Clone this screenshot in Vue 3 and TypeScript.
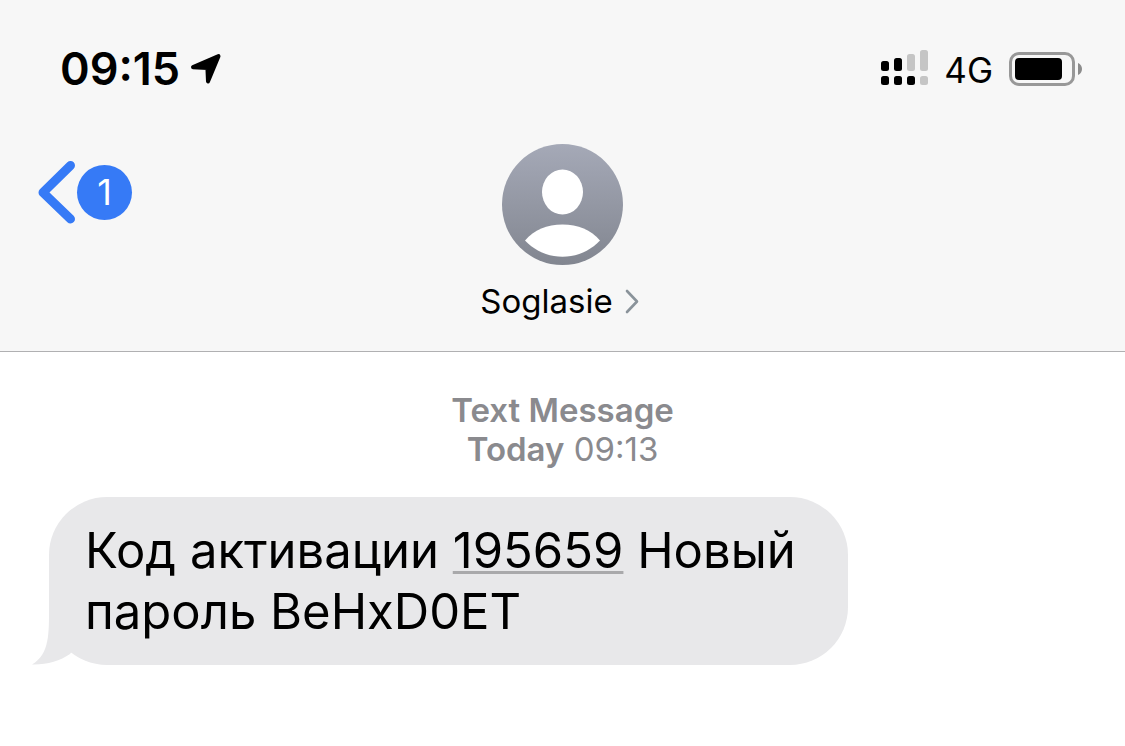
<script setup lang="ts">
interface Conversation {
  contact: string
  unread: number
  kind: string
  day: string
  time: string
}

interface SignalBar {
  x: number
  y: number
  height: number
  active: boolean
}

const clock = '09:15'
const network = '4G'

const conversation: Conversation = {
  contact: 'Soglasie',
  unread: 1,
  kind: 'Text Message',
  day: 'Today',
  time: '09:13',
}

const signal: SignalBar[] = [
  { x: 0, y: 11, height: 10, active: true },
  { x: 13, y: 8, height: 13, active: true },
  { x: 26, y: 4, height: 17, active: false },
  { x: 39, y: 0, height: 21, active: false },
  { x: 0, y: 26, height: 9, active: true },
  { x: 13, y: 26, height: 9, active: true },
  { x: 26, y: 26, height: 9, active: true },
  { x: 39, y: 26, height: 9, active: false },
]
</script>

<template>
  <div class="screen">
    <header class="header">
      <div class="status">
        <div class="status-left">
          <span class="clock">{{ clock }}</span>
          <svg class="location" width="32" height="32" viewBox="0 0 32 32" aria-hidden="true">
            <path d="M3 14.200 28.500 3.200 18 28.500 17.400 15Z" fill="#000" stroke="#000" stroke-width="4" stroke-linejoin="round" />
          </svg>
        </div>
        <div class="status-right">
          <svg width="47" height="38" viewBox="0 0 47 38" aria-hidden="true">
            <rect
              v-for="(bar, i) in signal"
              :key="i"
              :x="bar.x"
              :y="bar.y"
              width="8"
              :height="bar.height"
              rx="2.5"
              :fill="bar.active ? '#000' : '#c5c5c5'"
            />
          </svg>
          <span class="network">{{ network }}</span>
          <svg width="74" height="34" viewBox="0 0 74 34" aria-hidden="true">
            <rect x="1.5" y="1.5" width="63" height="31" rx="8.5" fill="none" stroke="#989898" stroke-width="3" />
            <rect x="6" y="6" width="47" height="22" rx="4" fill="#000" />
            <path d="M69 11c2.700 1.200 4 3.500 4 6s-1.300 4.800-4 6z" fill="#8c8c8c" />
          </svg>
        </div>
      </div>

      <nav class="nav">
        <button class="back" type="button" aria-label="Back">
          <svg width="38" height="64" viewBox="0 0 38 64" aria-hidden="true">
            <path d="M32.500 5.500 5 32.500l27.500 26.500" fill="none" stroke="#367af6" stroke-width="9" stroke-linecap="round" stroke-linejoin="round" />
          </svg>
          <span class="badge">{{ conversation.unread }}</span>
        </button>

        <button class="contact" type="button">
          <svg width="121" height="121" viewBox="0 0 121 121" aria-hidden="true">
            <defs>
              <linearGradient id="avatar-fill" x1="0" y1="0" x2="0" y2="1">
                <stop offset="0" stop-color="#a5a9b7" />
                <stop offset="1" stop-color="#828690" />
              </linearGradient>
            </defs>
            <circle cx="60.500" cy="60.500" r="60.500" fill="url(#avatar-fill)" />
            <ellipse cx="60.500" cy="48" rx="20.500" ry="22.500" fill="#fff" />
            <path d="M23 96.500C32 86 45 80.500 60.500 80.500S89 86 98 96.500C88 107 75 112.700 60.500 112.700S33 107 23 96.500Z" fill="#fff" />
          </svg>
          <span class="contact-name">
            {{ conversation.contact }}
            <svg width="14" height="26" viewBox="0 0 14 26" aria-hidden="true">
              <path d="M2 3 12 13.500 2 24" fill="none" stroke="#8a939a" stroke-width="2.600" stroke-linecap="round" stroke-linejoin="round" />
            </svg>
          </span>
        </button>
      </nav>
    </header>

    <main class="thread">
      <p class="stamp">
        <strong>{{ conversation.kind }}</strong><br />
        <strong>{{ conversation.day }}</strong> {{ conversation.time }}
      </p>

      <div class="bubble">
        <svg class="tail" width="50" height="60" viewBox="0 0 50 60" aria-hidden="true">
          <path d="M17 0C17 28 18 49 0 59.500C14 60 28 56 38 49L50 30V0Z" fill="#e8e8ea" />
        </svg>
        <p class="text">
          <span>Код активации</span> <a class="code" href="#">195659</a> <span>Новый</span> <span>пароль BeHxD0ET</span>
        </p>
      </div>
    </main>
  </div>
</template>

<style>
body {
  margin: 0;
  background: #fff;
}
</style>

<style scoped>
.screen {
  min-height: 100vh;
  background: #fff;
  color: #000;
  font-family: Inter, "Liberation Sans", sans-serif;
}

.header {
  background: #f7f7f7;
  border-bottom: 1px solid #b0b0b2;
}

.status {
  display: flex;
  justify-content: space-between;
  align-items: center;
  height: 64px;
  padding: 37px 42px 0 60px;
}

.status-left,
.status-right {
  display: flex;
  align-items: center;
}

.status-left {
  gap: 10px;
}

.status-right {
  gap: 16px;
}

.clock {
  font-size: 45px;
  font-weight: 600;
  line-height: 64px;
}

.network {
  padding-top: 2px;
  font-size: 35px;
  line-height: 64px;
}

.nav {
  display: grid;
  grid-template-columns: 1fr auto 1fr;
  align-items: start;
  padding: 43px 38px 29px;
}

button {
  border: 0;
  padding: 0;
  background: none;
  color: inherit;
  font: inherit;
  cursor: pointer;
}

.back {
  display: flex;
  align-items: center;
  justify-self: start;
  gap: 1px;
  margin-top: 16px;
}

.badge {
  width: 55px;
  border-radius: 50%;
  background: #367af6;
  color: #fff;
  font-size: 36px;
  line-height: 55px;
  text-align: center;
}

.contact {
  display: flex;
  flex-direction: column;
  align-items: center;
  gap: 15px;
}

.contact-name {
  display: flex;
  align-items: center;
  gap: 12px;
  padding-right: 6px;
  font-size: 33px;
  line-height: 42px;
}

.thread {
  display: flow-root;
  padding: 39px 49px;
}

.stamp {
  margin: 0 0 28px;
  color: #8a8a8e;
  font-size: 33px;
  line-height: 39px;
  text-align: center;
}

.stamp strong {
  font-weight: 600;
}

.bubble {
  position: relative;
  box-sizing: border-box;
  width: fit-content;
  max-width: calc(100% - 228px);
  padding: 23px 40px 23px 36px;
  border-radius: 58px;
  background: #e8e8ea;
}

.tail {
  position: absolute;
  left: -17px;
  bottom: 0;
}

.text {
  position: relative;
  margin: 0;
  font-size: 49px;
  line-height: 61px;
}

.code {
  color: inherit;
  text-decoration: underline;
  text-decoration-color: #a9a9ab;
  text-decoration-thickness: 3px;
  text-decoration-skip-ink: none;
  text-underline-offset: 3px;
}
</style>
